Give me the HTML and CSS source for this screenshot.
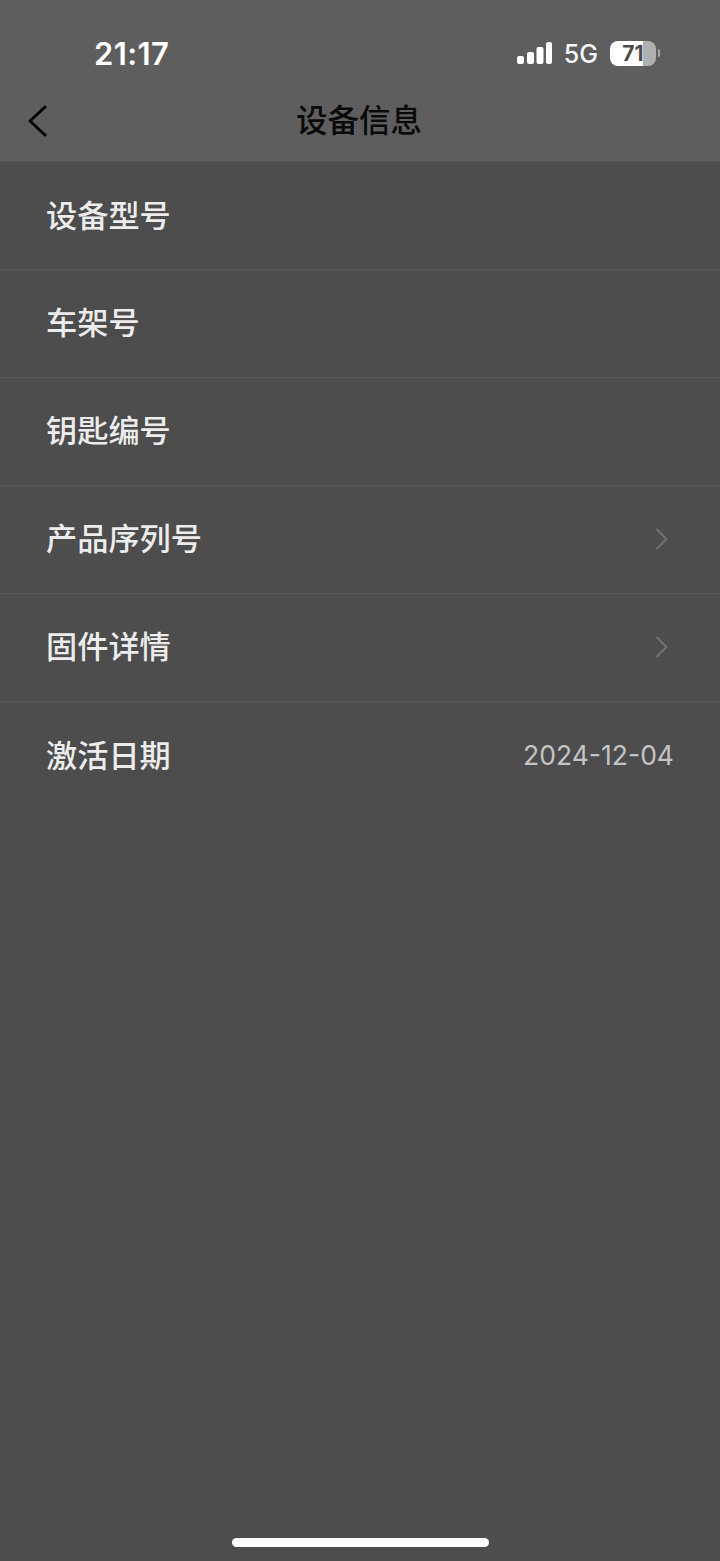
FILE: index.html
```html
<!DOCTYPE html>
<html lang="zh-CN">
<head>
<meta charset="utf-8">
<title>设备信息</title>
<link rel="stylesheet" href="styles.css">
</head>
<body>
<div class="screen">
  <header class="top">
    <div class="status">
      <span class="time">21:17</span>
      <div class="status-right">
        <svg class="signal" width="35" height="22" viewBox="0 0 35 22"><rect x="0" y="14" width="7" height="8" rx="2"/><rect x="10" y="10" width="7" height="12" rx="2"/><rect x="19.500" y="5" width="7" height="17" rx="2"/><rect x="29" y="0" width="6" height="22" rx="2"/></svg>
        <span class="net">5G</span>
        <div class="battery"><div class="battery-body"><span class="battery-num">71</span></div><span class="battery-cap"></span></div>
      </div>
    </div>
    <div class="nav">
      <svg class="back" width="20" height="32" viewBox="0 0 20 32"><path d="M18 2 L3 16 L18 30" fill="none" stroke="#000" stroke-width="3" stroke-linecap="round" stroke-linejoin="round"/></svg>
      <h1 class="title">设备信息</h1>
    </div>
  </header>
  <main class="list">
    <div class="row first"><span class="label">设备型号</span></div>
    <div class="row"><span class="label">车架号</span></div>
    <div class="row"><span class="label">钥匙编号</span></div>
    <div class="row"><span class="label">产品序列号</span><svg class="chev" width="13" height="22" viewBox="0 0 13 22"><path d="M1.5 1 L11.5 11 L1.5 21" fill="none" stroke="#727272" stroke-width="2"/></svg></div>
    <div class="row"><span class="label">固件详情</span><svg class="chev" width="13" height="22" viewBox="0 0 13 22"><path d="M1.5 1 L11.5 11 L1.5 21" fill="none" stroke="#727272" stroke-width="2"/></svg></div>
    <div class="row last"><span class="label">激活日期</span><span class="value">2024-12-04</span></div>
  </main>
  <div class="home"></div>
</div>
</body>
</html>
```
FILE: styles.css
```css
* { box-sizing: border-box; }
html, body { margin: 0; padding: 0; }
body { background: #4d4d4d; font-family: "Noto Sans CJK SC", "Liberation Sans", sans-serif; }
.screen { width: 720px; height: 1561px; display: flex; flex-direction: column; position: relative; background: #4d4d4d; overflow: hidden; }
.top { height: 162px; background: #5e5e5e; border-bottom: 1px solid #565656; display: flex; flex-direction: column; }
.status { height: 80px; padding: 26px 60px 0 94px; display: flex; justify-content: space-between; align-items: center; }
.time { font-family: Inter, "Liberation Sans", sans-serif; font-size: 31px; font-weight: 600; letter-spacing: 0.4px; color: #fff; line-height: 1; }
.status-right { display: flex; align-items: center; }
.signal { fill: #fff; margin-right: 12px; margin-top: -1px; }
.net { font-family: Inter, "Liberation Sans", sans-serif; font-size: 25px; font-weight: 500; color: #f7f7f7; line-height: 1; margin-right: 12px; margin-top: 2px; }
.battery { display: flex; align-items: center; gap: 2px; }
.battery-body { width: 46px; height: 25px; border-radius: 8px; background: linear-gradient(to right, #fff 0, #fff 33px, #b0b0b0 33px, #b0b0b0 100%); display: flex; justify-content: center; align-items: center; }
.battery-num { font-family: Inter, "Liberation Sans", sans-serif; font-size: 21px; font-weight: 700; color: #4a4a4a; line-height: 1; }
.battery-cap { width: 2px; height: 8px; border-radius: 0 2px 2px 0; background: #a8a8a8; }
.nav { flex: 1; position: relative; display: flex; align-items: center; justify-content: center; padding-bottom: 3px; }
.back { position: absolute; left: 27px; top: 25px; }
.title { margin: 0; font-size: 31.500px; font-weight: 500; color: #0a0a0a; line-height: 1; transform: translateX(-1px); }
.list { display: flex; flex-direction: column; }
.row { height: 108px; padding: 0 46px 5px 46px; display: flex; align-items: center; justify-content: space-between; border-bottom: 1px solid #585858; }
.row.first { height: 108px; padding-bottom: 4px; }
.row.last { border-bottom: 0; }
.label { font-size: 31.200px; font-weight: 500; color: #ececec; line-height: 1; }
.value { font-family: Inter, "Liberation Sans", sans-serif; font-size: 26.500px; color: #c4c4c4; line-height: 1; margin-top: 3px; }
.chev { margin-right: 6px; margin-top: 3px; }
.home { position: absolute; left: 232px; bottom: 14px; width: 257px; height: 9px; border-radius: 5px; background: #fff; }
```
